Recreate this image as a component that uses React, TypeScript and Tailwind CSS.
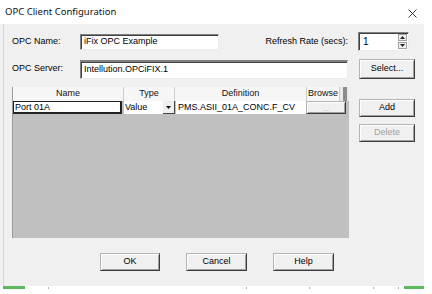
import React from "react";

const raised =
  "bg-[#f0f0f0] border border-t-[#b4b4b4] border-l-[#b4b4b4] border-r-[#3c3c3c] border-b-[#3c3c3c] shadow-[inset_1px_1px_0_#ffffff,inset_-1px_-1px_0_#a0a0a0]";
const sunken =
  "bg-white border border-t-[#808080] border-l-[#808080] border-r-[#ececec] border-b-[#ececec] shadow-[inset_1px_1px_0_#404040]";

function Btn({ label, w, disabled }: { label: string; w: string; disabled?: boolean }) {
  return (
    <div
      className={`${raised} ${w} h-[18px] flex items-center justify-center text-[9px] ${
        disabled ? "text-[#a0a0a0]" : "text-black"
      }`}
    >
      {label}
    </div>
  );
}

export default function App() {
  return (
    <div
      className="w-[432px] h-[294px] bg-white overflow-hidden flex flex-col text-black"
      style={{ fontFamily: '"Liberation Sans", Arial, sans-serif' }}
    >
      <div className="w-[424px] h-[286px] bg-[#f0f0f0] flex flex-col">
        {/* title bar */}
        <div className="h-[24px] bg-white flex items-center pl-[5px] pr-[7px] shrink-0">
          <span
            className="text-[9.5px] text-[#111]"
            style={{ fontFamily: '"Noto Sans", "Open Sans", sans-serif' }}
          >
            OPC Client Configuration
          </span>
          <div className="flex-1" />
          <svg width="9" height="9" viewBox="0 0 9 9" className="mt-[2px]">
            <path d="M0.5 0.5 L8.5 8.5 M8.5 0.5 L0.5 8.5" stroke="#222" strokeWidth="0.9" fill="none" />
          </svg>
        </div>

        {/* body */}
        <div className="flex-1 ml-[3px] border-l border-[#d6d6d6] flex flex-col text-[9px]">
          {/* row 1 */}
          <div className="mt-[8px] h-[19px] flex items-center pl-[8px] pr-[15px]">
            <span className="w-[68px]">OPC Name:</span>
            <div className={`${sunken} w-[139px] h-[16px] flex items-center pl-[3px]`}>iFix OPC Example</div>
            <div className="flex-1" />
            <span className="mr-[10px]">Refresh Rate (secs):</span>
            <div className={`${sunken} w-[51px] h-[19px] flex items-center pl-[4px]`}>
              <span className="flex-1 text-[10px]">1</span>
              <div className="w-[9px] h-[15px] flex flex-col mr-[1px] gap-[1px]">
                <div className="flex-1 bg-[#f0f0f0] border border-[#a0a0a0] flex items-center justify-center">
                  <svg width="5" height="3" viewBox="0 0 5 3">
                    <path d="M0 3 L2.5 0 L5 3 Z" fill="#222" />
                  </svg>
                </div>
                <div className="flex-1 bg-[#f0f0f0] border border-[#a0a0a0] flex items-center justify-center">
                  <svg width="5" height="3" viewBox="0 0 5 3">
                    <path d="M0 0 L2.5 3 L5 0 Z" fill="#222" />
                  </svg>
                </div>
              </div>
            </div>
          </div>

          {/* row 2 */}
          <div className="mt-[8px] h-[20px] flex items-center pl-[8px]">
            <span className="w-[68px]">OPC Server:</span>
            <div className={`${sunken} w-[268px] h-[19px] flex items-center pl-[3px] border-t-2`}>
              Intellution.OPCiFIX.1
            </div>
            <div className="ml-[11px]">
              <div className={`${raised} w-[56px] h-[20px] flex items-center justify-center`}>Select...</div>
            </div>
          </div>

          {/* grid + side buttons */}
          <div className="mt-[8px] flex pl-[8px]">
            <div className="w-[337px] h-[151px] flex flex-col bg-[#c0c0c0] border-l border-[#9a9a9a]">
              {/* header */}
              <div className="h-[14px] flex bg-[#f6f6f6] text-[#111]">
                <div className="w-[111px] flex items-center justify-center border-r border-[#cfcfcf]">Name</div>
                <div className="w-[51px] flex items-center justify-center border-r border-[#cfcfcf]">Type</div>
                <div className="w-[132px] flex items-center justify-center border-r border-[#cfcfcf]">Definition</div>
                <div className="w-[33px] flex items-center justify-center border-r border-[#cfcfcf]">Browse</div>
                <div className="flex-1 flex bg-[#e9e9e9]">
                  <div className="ml-[3px] w-[4px] bg-[#8c8c8c]" />
                </div>
              </div>
              {/* data row */}
              <div className="h-[13px] flex">
                <div className="w-[109px] bg-white border border-[#222] border-r-2 border-b-2 flex items-center pl-[1px] leading-none">
                  Port 01A
                </div>
                <div className="w-[2px]" />
                <div className="w-[51px] bg-white flex items-center pl-[1px]">
                  <span className="flex-1">Value</span>
                  <div className="w-[12px] h-[13px] bg-[#f0f0f0] border-r border-b border-[#444] flex items-center justify-center">
                    <svg width="5" height="3" viewBox="0 0 5 3">
                      <path d="M0 0 L2.5 3 L5 0 Z" fill="#111" />
                    </svg>
                  </div>
                </div>
                <div className="w-[1px]" />
                <div className="w-[130px] bg-white flex items-center pl-[2px]">PMS.ASII_01A_CONC.F_CV</div>
                <div className={`${raised} w-[40px] h-[13px] flex items-end justify-center text-[#a8a8a8] text-[7px] leading-none pb-[1px]`}>
                  ...
                </div>
                <div className="flex-1" />
              </div>
              <div className="flex-1" />
            </div>
            <div className="ml-[10px] mt-[12px] flex flex-col gap-[7px]">
              <Btn label="Add" w="w-[56px]" />
              <Btn label="Delete" w="w-[56px]" disabled />
            </div>
          </div>

          {/* bottom buttons */}
          <div className="mt-[15px] flex pl-[96px] gap-[26px]">
            <Btn label="OK" w="w-[60px]" />
            <Btn label="Cancel" w="w-[61px]" />
            <Btn label="Help" w="w-[61px]" />
          </div>
        </div>
      </div>

      {/* bottom strip */}
      <div className="h-[8px] flex items-start">
        <div className="ml-[3px] w-[22px] h-[3px] bg-[#5cb85c]" />
        <div className="ml-[23px] mt-[1px] w-[1px] h-[2px] bg-[#b0b0b0]" />
        <div className="ml-[197px] mt-[1px] w-[1px] h-[2px] bg-[#b0b0b0]" />
        <div className="ml-[62px] mt-[1px] w-[1px] h-[2px] bg-[#b0b0b0]" />
        <div className="ml-[63px] mt-[1px] w-[1px] h-[2px] bg-[#b0b0b0]" />
        <div className="ml-[24px] mt-[1px] w-[1px] h-[2px] bg-[#b0b0b0]" />
        <div className="ml-[5px] w-[20px] h-[3px] bg-[#5cb85c]" />
      </div>
    </div>
  );
}
